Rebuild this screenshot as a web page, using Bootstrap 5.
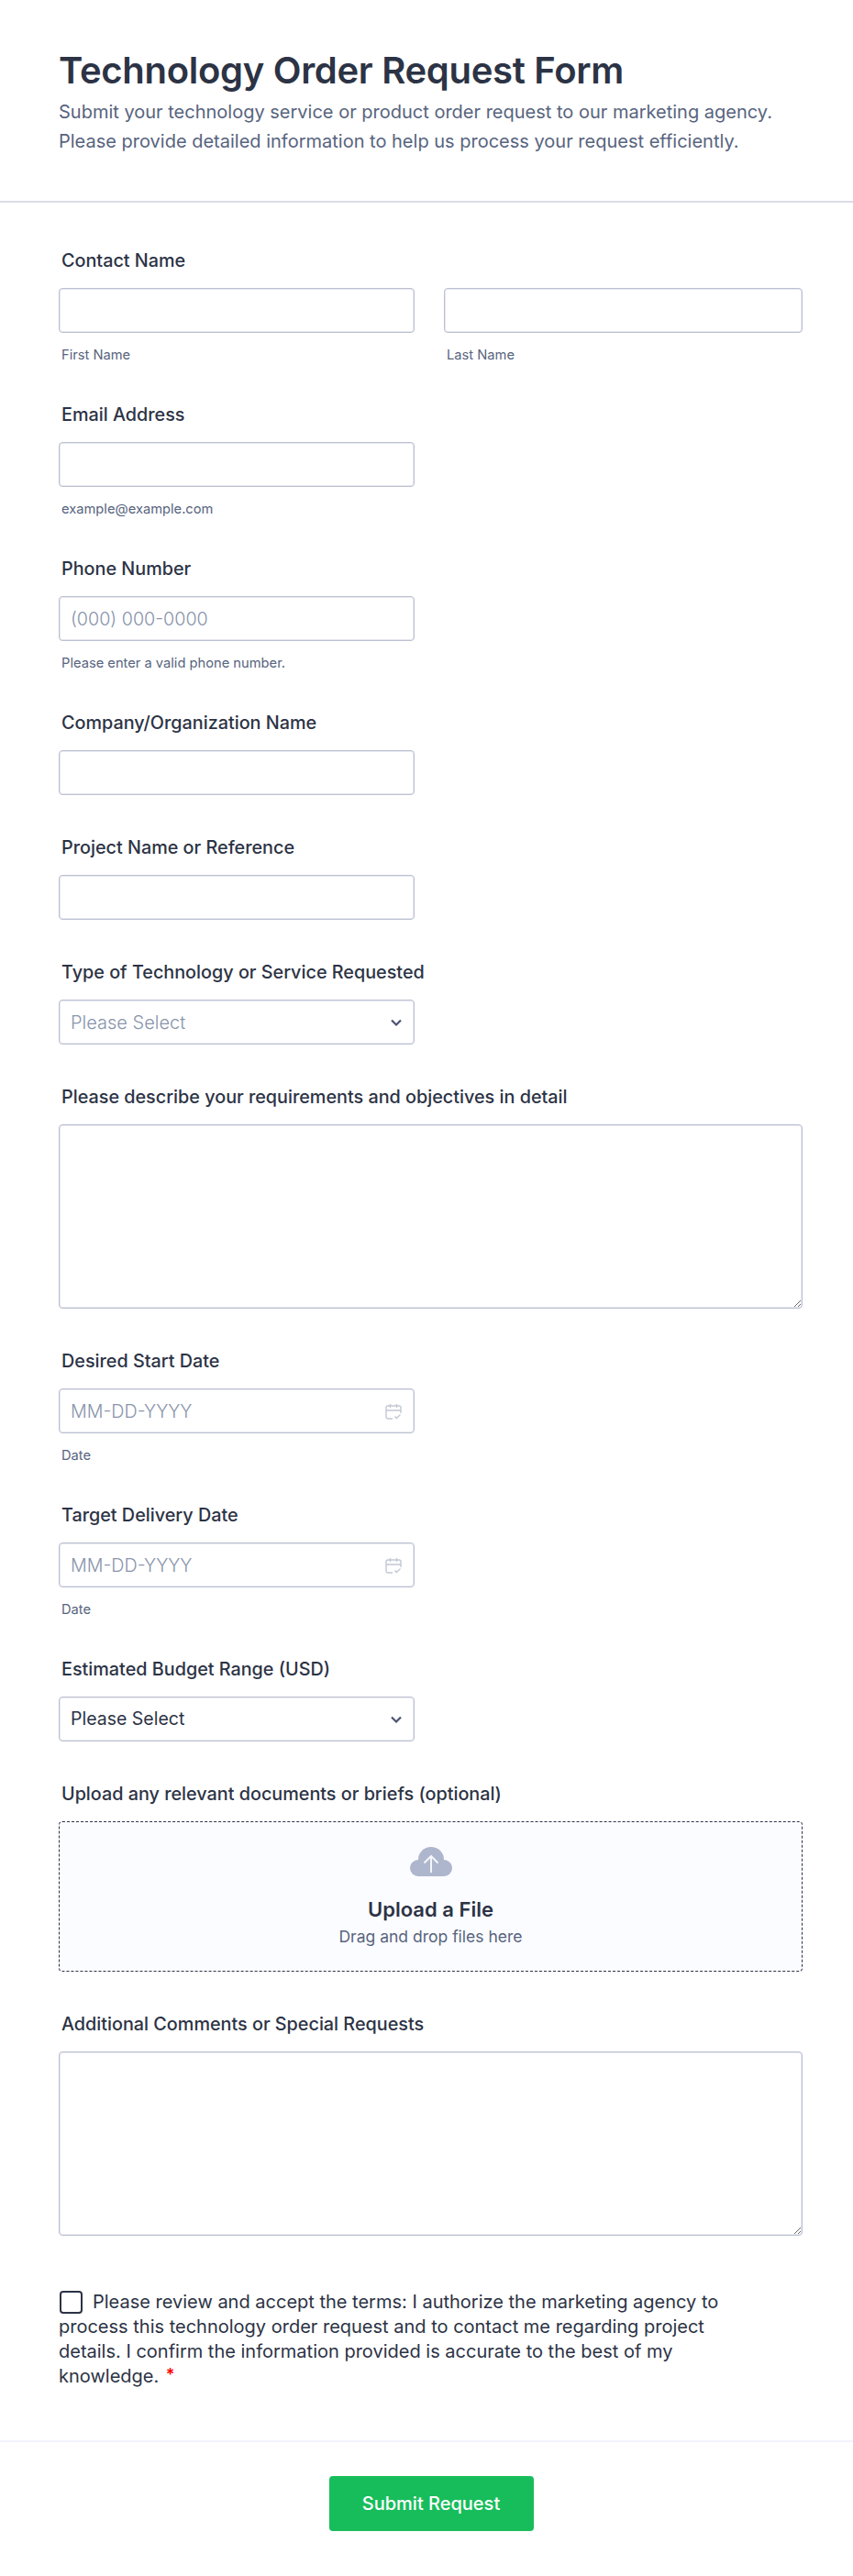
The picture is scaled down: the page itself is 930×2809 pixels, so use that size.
<!DOCTYPE html>
<html lang="en">
<head>
    <meta charset="UTF-8">
    <meta name="viewport" content="width=device-width, initial-scale=1.0">
    <title>Technology Order Request Form</title>
    <link href="https://cdn.jsdelivr.net/npm/bootstrap@5.3.0/dist/css/bootstrap.min.css" rel="stylesheet">
    <style>
        body { font-family: Inter, "Liberation Sans", sans-serif; color: #2c3345; background: #fff; }
        .form-head { padding: 52px 64px 0; height: 221px; border-bottom: 2px solid #dadde8; }
        .form-head h1 { font-size: 40px; font-weight: 600; line-height: 50px; letter-spacing: -0.3px; margin: 0 0 4px; color: #2c3345; }
        .form-head p { font-size: 20px; line-height: 32px; margin: 0; color: #57647e; }
        .form-body { padding: 6px 55px 0 64px; }
        .field-row { --bs-gutter-x: 32px; }
        .col-first { flex: 0 0 auto; width: 420px; }
        .field { padding-top: 44px; }
        .field-label { display: block; font-size: 19.8px; font-weight: 500; line-height: 26px; margin: 0 0 17px 3px; color: #2c3345; }
        .form-control.field-input, .form-select.field-input { height: 49px; border: 1px solid #bcc0d0; border-radius: 4px; font-size: 19.5px; color: #2c3345; padding: 0 12px; box-shadow: inset 0 0 0 1px #e6e8f0; }
        .form-control.field-input::placeholder { color: #8894ab; font-weight: 300; font-size: 19.7px; }
        .form-select.field-input { background-image: url("data:image/svg+xml,%3csvg xmlns='http://www.w3.org/2000/svg' viewBox='0 0 14 10'%3e%3cpath fill='none' stroke='%234a5173' stroke-width='2.2' d='M2 2.500l5 5 5-5'/%3e%3c/svg%3e"); background-position: right 12px center; background-size: 14px 10px; }
        .form-select.field-input.pick-empty { color: #8894ab; font-weight: 300; font-size: 20px; }
        textarea.form-control.field-area { height: 201px; border: 1px solid #bcc0d0; border-radius: 4px; box-shadow: inset 0 0 0 1px #e6e8f0; }
        .field-sub { display: block; font-size: 14.7px; line-height: 18px; margin: 15px 0 -1px 3px; color: #57647e; }
        .date-wrap { position: relative; }
        .date-icon { position: absolute; right: 14px; top: 16px; width: 18px; height: 19px; }
        .drop-zone { height: 164px; border: 1px dashed #2c3345; border-radius: 4px; background: #fbfcff; padding-top: 27px; text-align: center; }
        .drop-zone svg { display: block; margin: 0 auto; }
        .drop-title { font-size: 22px; font-weight: 600; line-height: 28px; margin-top: 22px; }
        .drop-hint { font-size: 17.500px; line-height: 22px; margin-top: 5px; color: #57647e; }
        .terms { width: 725px; padding-top: 59px; font-size: 20px; line-height: 27px; color: #2c3345; }
        .terms .form-check-input { width: 25px; height: 25px; margin: 0 11px 0 1px; border: 2px solid #2c3345; border-radius: 4px; float: none; vertical-align: -6px; }
        .req-star { color: #f00; font-size: 18px; font-weight: 600; position: relative; top: -2px; margin-left: 2px; }
        .form-foot { margin-top: 56px; border-top: 2px solid #f3f3fe; padding: 37px 0 0 10px; height: 148px; }
        .btn.send-btn { width: 223px; height: 60px; background: #18bd5b; border: 0; border-radius: 4px; color: #fff; font-size: 20px; font-weight: 500; }
    </style>
</head>
<body>
    <!-- Encabezado -->
    <header class="form-head">
        <h1>Technology Order Request Form</h1>
        <p>Submit your technology service or product order request to our marketing agency.</p>
        <p>Please provide detailed information to help us process your request efficiently.</p>
    </header>

    <form class="form-body" onsubmit="return false">
        <div class="field">
            <label class="field-label">Contact Name</label>
            <div class="row field-row">
                <div class="col-first">
                    <input type="text" class="form-control field-input">
                    <span class="field-sub">First Name</span>
                </div>
                <div class="col">
                    <input type="text" class="form-control field-input">
                    <span class="field-sub">Last Name</span>
                </div>
            </div>
        </div>

        <div class="field">
            <label class="field-label">Email Address</label>
            <div class="row field-row">
                <div class="col-first">
                    <input type="email" class="form-control field-input">
                    <span class="field-sub">example@example.com</span>
                </div>
            </div>
        </div>

        <div class="field">
            <label class="field-label">Phone Number</label>
            <div class="row field-row">
                <div class="col-first">
                    <input type="tel" class="form-control field-input" placeholder="(000) 000-0000">
                    <span class="field-sub">Please enter a valid phone number.</span>
                </div>
            </div>
        </div>

        <div class="field">
            <label class="field-label">Company/Organization Name</label>
            <div class="row field-row">
                <div class="col-first"><input type="text" class="form-control field-input"></div>
            </div>
        </div>

        <div class="field">
            <label class="field-label">Project Name or Reference</label>
            <div class="row field-row">
                <div class="col-first"><input type="text" class="form-control field-input"></div>
            </div>
        </div>

        <div class="field">
            <label class="field-label">Type of Technology or Service Requested</label>
            <div class="row field-row">
                <div class="col-first">
                    <select class="form-select field-input pick-empty">
                        <option>Please Select</option>
                    </select>
                </div>
            </div>
        </div>

        <div class="field">
            <label class="field-label">Please describe your requirements and objectives in detail</label>
            <textarea class="form-control field-area"></textarea>
        </div>

        <div class="field">
            <label class="field-label">Desired Start Date</label>
            <div class="row field-row">
                <div class="col-first">
                    <div class="date-wrap">
                        <input type="text" class="form-control field-input" placeholder="MM-DD-YYYY">
                        <svg class="date-icon" viewBox="0 0 18 19" fill="none" stroke="#c3c8d4" stroke-width="1.4">
                            <path d="M8 17H3a2 2 0 0 1-2-2V5a2 2 0 0 1 2-2h12a2 2 0 0 1 2 2v6M1 8h16M5.500 1v4M12.500 1v4M10.500 14.500l2 2 4-4"/>
                        </svg>
                    </div>
                    <span class="field-sub">Date</span>
                </div>
            </div>
        </div>

        <div class="field">
            <label class="field-label">Target Delivery Date</label>
            <div class="row field-row">
                <div class="col-first">
                    <div class="date-wrap">
                        <input type="text" class="form-control field-input" placeholder="MM-DD-YYYY">
                        <svg class="date-icon" viewBox="0 0 18 19" fill="none" stroke="#c3c8d4" stroke-width="1.4">
                            <path d="M8 17H3a2 2 0 0 1-2-2V5a2 2 0 0 1 2-2h12a2 2 0 0 1 2 2v6M1 8h16M5.500 1v4M12.500 1v4M10.500 14.500l2 2 4-4"/>
                        </svg>
                    </div>
                    <span class="field-sub">Date</span>
                </div>
            </div>
        </div>

        <div class="field">
            <label class="field-label">Estimated Budget Range (USD)</label>
            <div class="row field-row">
                <div class="col-first">
                    <select class="form-select field-input">
                        <option>Please Select</option>
                    </select>
                </div>
            </div>
        </div>

        <div class="field">
            <label class="field-label">Upload any relevant documents or briefs (optional)</label>
            <div class="drop-zone">
                <svg width="46" height="32" viewBox="0 0 46 32">
                    <g fill="#adb6cc">
                        <circle cx="9" cy="23" r="9"/>
                        <circle cx="23" cy="14" r="14"/>
                        <circle cx="37" cy="23" r="9"/>
                        <rect x="9" y="18" width="28" height="14"/>
                    </g>
                    <path fill="none" stroke="#f4f6fb" stroke-width="2" d="M23 28V10M15.500 17.500L23 10l7.500 7.500"/>
                </svg>
                <div class="drop-title">Upload a File</div>
                <div class="drop-hint">Drag and drop files here</div>
            </div>
        </div>

        <div class="field">
            <label class="field-label">Additional Comments or Special Requests</label>
            <textarea class="form-control field-area"></textarea>
        </div>

        <div class="terms">
            <input type="checkbox" class="form-check-input">Please review and accept the terms: I authorize the marketing agency to process this technology order request and to contact me regarding project details. I confirm the information provided is accurate to the best of my knowledge. <span class="req-star">*</span>
        </div>
    </form>

    <div class="form-foot d-flex justify-content-center align-items-start">
        <button type="button" class="btn send-btn">Submit Request</button>
    </div>

    <script src="https://cdn.jsdelivr.net/npm/bootstrap@5.3.0/dist/js/bootstrap.bundle.min.js"></script>
</body>
</html>
